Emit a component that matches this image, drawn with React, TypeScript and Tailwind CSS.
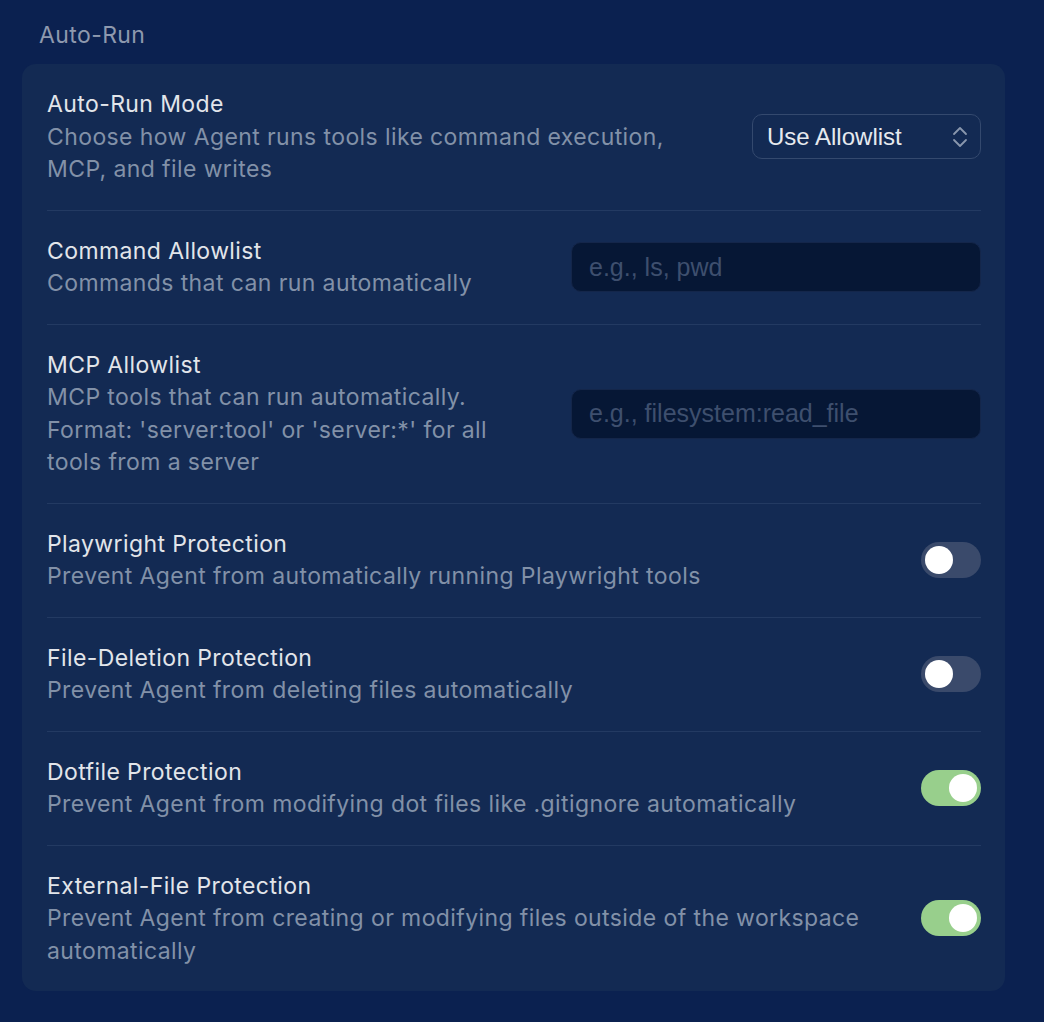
import React, { useState } from 'react';

const font = { fontFamily: 'Inter, "Noto Sans", sans-serif' };
const native = { fontFamily: '"Liberation Sans", Arial, sans-serif' };

function Toggle({ on }: { on: boolean }) {
  const [checked, setChecked] = useState(on);
  return (
    <button
      onClick={() => setChecked(!checked)}
      className={`shrink-0 w-[60px] h-[36px] rounded-full flex items-center px-[4px] ${
        checked ? 'bg-[#98cf8c] justify-end' : 'bg-[#3a4a6b] justify-start'
      }`}
    >
      <span className="block w-[28px] h-[28px] rounded-full bg-white" />
    </button>
  );
}

function Row({
  title,
  desc,
  children,
  last,
  descClass = '',
}: {
  title: string;
  desc: string;
  children: React.ReactNode;
  last?: boolean;
  descClass?: string;
}) {
  return (
    <div className={`flex items-center gap-6 py-6 ${last ? '' : 'border-b border-[#233a62]'}`}>
      <div className="flex-1 min-w-0">
        <div className="text-[23px] leading-[32.5px] tracking-[0.4px] text-[#e2e5ea]">{title}</div>
        <div className={`text-[23px] leading-[32.5px] tracking-[0.4px] text-[#8291a8] ${descClass}`}>{desc}</div>
      </div>
      {children}
    </div>
  );
}

function TextInput({ placeholder }: { placeholder: string }) {
  return (
    <input
      placeholder={placeholder}
      className="shrink-0 w-[410px] h-[50px] rounded-[10px] bg-[#061735] border border-[#14264a] px-[17px] text-[25px] text-[#c9d0dc] placeholder:text-[#3e4f6e] outline-none"
      style={native}
    />
  );
}

export default function App() {
  return (
    <div className="min-h-screen bg-[#0b2150] pl-[22px] pr-[39px] pt-[19px] pb-8" style={font}>
      <div className="pl-[17px] text-[23px] leading-[33px] tracking-[0.4px] text-[#8e99ae] mb-[12px]">Auto-Run</div>
      <div className="bg-[#132a53] rounded-[14px] pl-[25px] pr-[24px]">
        <Row
          title="Auto-Run Mode"
          desc="Choose how Agent runs tools like command execution, MCP, and file writes"
          descClass="max-w-[650px]"
        >
          <div
            className="shrink-0 w-[229px] h-[45px] rounded-[10px] border border-[#34496e] flex items-center justify-between pl-[14px] pr-[12px] text-[24px] text-[#e6e9ee]"
            style={native}
          >
            <span>Use Allowlist</span>
            <svg width="16" height="24" viewBox="0 0 16 24" fill="none" stroke="#8a97ad" strokeWidth="1.8" strokeLinecap="round" strokeLinejoin="round">
              <path d="M2 9 L8 3 L14 9" />
              <path d="M2 15 L8 21 L14 15" />
            </svg>
          </div>
        </Row>
        <Row title="Command Allowlist" desc="Commands that can run automatically">
          <TextInput placeholder="e.g., ls, pwd" />
        </Row>
        <Row
          title="MCP Allowlist"
          desc="MCP tools that can run automatically. Format: 'server:tool' or 'server:*' for all tools from a server"
        >
          <TextInput placeholder="e.g., filesystem:read_file" />
        </Row>
        <Row title="Playwright Protection" desc="Prevent Agent from automatically running Playwright tools">
          <Toggle on={false} />
        </Row>
        <Row title="File-Deletion Protection" desc="Prevent Agent from deleting files automatically">
          <Toggle on={false} />
        </Row>
        <Row title="Dotfile Protection" desc="Prevent Agent from modifying dot files like .gitignore automatically">
          <Toggle on={true} />
        </Row>
        <Row
          title="External-File Protection"
          desc="Prevent Agent from creating or modifying files outside of the workspace automatically"
          last
        >
          <Toggle on={true} />
        </Row>
      </div>
    </div>
  );
}
